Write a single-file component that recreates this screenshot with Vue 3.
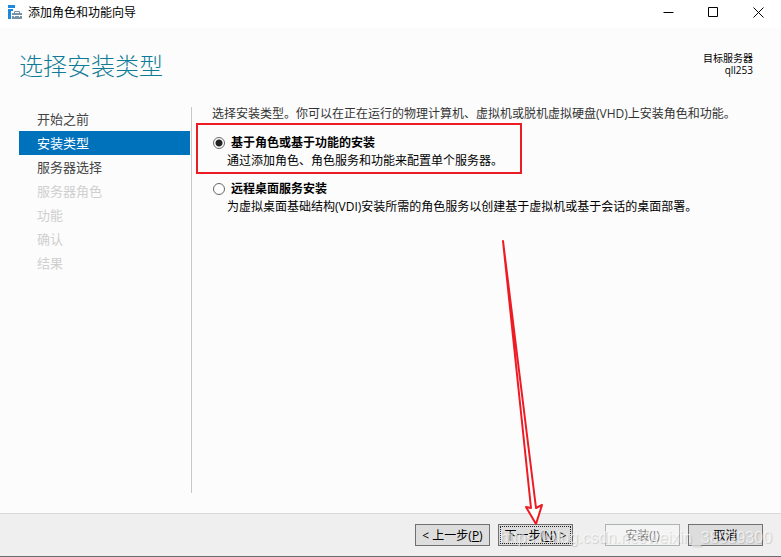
<template>
  <div class="wizard">
    <header class="titlebar">
      <svg class="app-icon" viewBox="0 0 14 14" aria-hidden="true">
        <path d="M0 0h7v3H0zM0 4h5v2H3v8H0z" fill="#1e88dc" />
        <path d="M4 8h10v2H4zM4 11h2v1h1v-1h4v1h1v-1h2v3H4z" fill="#7593a5" />
        <path d="M6.5 8V6.5h5V8" fill="none" stroke="#7593a5" />
      </svg>
      <span class="caption">添加角色和功能向导</span>
      <div class="window-buttons">
        <button type="button" aria-label="最小化">
          <svg viewBox="0 0 11 11"><path d="M0.5 5.5h10" /></svg>
        </button>
        <button type="button" aria-label="最大化">
          <svg viewBox="0 0 11 11"><path d="M0.5 0.5h9v9h-9z" /></svg>
        </button>
        <button type="button" aria-label="关闭">
          <svg viewBox="0 0 11 11"><path d="M0.5 0.5l10 10M10.5 0.5l-10 10" /></svg>
        </button>
      </div>
    </header>

    <div class="heading">
      <h1>选择安装类型</h1>
      <div class="target">
        <div>目标服务器</div>
        <div>qll253</div>
      </div>
    </div>

    <div class="body">
      <nav class="steps">
        <a
          v-for="step in steps"
          :key="step.name"
          href="#"
          :class="step.state"
          @click.prevent
        >{{ step.name }}</a>
      </nav>

      <main class="content">
        <p class="intro">
          选择安装类型。你可以在正在运行的物理计算机、虚拟机或脱机虚拟硬盘(VHD)上安装角色和功能。
        </p>
        <label
          v-for="option in options"
          :key="option.value"
          class="option"
          :class="{ marked: option.marked }"
        >
          <input v-model="selected" type="radio" name="install-type" :value="option.value" />
          <span class="option-title">{{ option.title }}</span>
          <span class="option-text">{{ option.text }}</span>
        </label>
      </main>
    </div>

    <footer class="footer">
      <button type="button">&lt; 上一步(<u>P</u>)</button>
      <button type="button" class="focused">下一步(<u>N</u>) &gt;</button>
      <button type="button" class="install" disabled>安装(<u>I</u>)</button>
      <button type="button">取消</button>
      <span class="watermark">https://blog.csdn.net/weixin_38639300</span>
    </footer>

    <svg class="arrow" viewBox="0 0 44 286" aria-hidden="true">
      <path d="M3 1L31 268L26 267L36 284L42 265L36 268Z" />
    </svg>
  </div>
</template>

<script setup>
import { ref } from 'vue'

const selected = ref('role')

const steps = [
  { name: '开始之前', state: '' },
  { name: '安装类型', state: 'active' },
  { name: '服务器选择', state: '' },
  { name: '服务器角色', state: 'disabled' },
  { name: '功能', state: 'disabled' },
  { name: '确认', state: 'disabled' },
  { name: '结果', state: 'disabled' }
]

const options = [
  {
    value: 'role',
    title: '基于角色或基于功能的安装',
    text: '通过添加角色、角色服务和功能来配置单个服务器。',
    marked: true
  },
  {
    value: 'rds',
    title: '远程桌面服务安装',
    text: '为虚拟桌面基础结构(VDI)安装所需的角色服务以创建基于虚拟机或基于会话的桌面部署。',
    marked: false
  }
]
</script>

<style>
body {
  margin: 0;
}
</style>

<style scoped>
.wizard {
  position: relative;
  display: flex;
  flex-direction: column;
  box-sizing: border-box;
  min-height: 100vh;
  border-bottom: 1px solid #6b6b6b;
  background: #fcfcfc;
  color: #000;
  font-family: "Open Sans", "Noto Sans CJK SC", sans-serif;
  font-size: 12px;
  line-height: 18px;
}

.titlebar {
  display: flex;
  align-items: center;
  height: 28px;
  padding-left: 8px;
  background: #fff;
}

.app-icon {
  width: 14px;
  height: 14px;
  margin: 0 6px 4px 0;
}

.caption {
  padding-bottom: 2px;
}

.window-buttons {
  display: flex;
  margin-left: auto;
}

.window-buttons button {
  display: flex;
  align-items: center;
  justify-content: center;
  width: 45px;
  height: 25px;
  margin-bottom: 3px;
  padding: 0;
  border: 0;
  background: none;
}

.window-buttons svg {
  width: 11px;
  height: 11px;
  overflow: visible;
  fill: none;
  stroke: #000;
}

.heading {
  display: flex;
  justify-content: space-between;
  padding: 20px 28px 0 19px;
}

h1 {
  margin: 0;
  color: #107b97;
  font-size: 24px;
  font-weight: 300;
  line-height: 36px;
}

.target {
  padding-top: 4px;
  font-size: 10px;
  line-height: 12px;
  text-align: right;
}

.body {
  display: flex;
  flex: 1;
  padding: 23px 20px 20px 19px;
}

.steps {
  display: flex;
  flex: none;
  flex-direction: column;
  width: 171px;
  padding-right: 1px;
  border-right: 1px solid #c8c8c8;
}

.steps a {
  padding-left: 18px;
  color: #444;
  font-size: 13px;
  line-height: 24px;
  text-decoration: none;
}

.steps a.active {
  background: #0072bc;
  color: #fff;
}

.steps a.disabled {
  color: #cfcfcf;
}

.content {
  flex: 1;
  padding-left: 4px;
}

.intro {
  margin: 0 0 0 16px;
  padding-bottom: 2px;
  color: #333;
  line-height: 14px;
}

.option {
  display: grid;
  grid-template-columns: 15px 1fr;
  width: fit-content;
  padding: 4px 17px 2px 15px;
  border: 2px solid transparent;
}

.option.marked {
  padding-top: 9px;
  border-color: #ed1c24;
}

.option input {
  box-sizing: border-box;
  width: 12px;
  height: 12px;
  margin: 3px 0 0;
  border: 1px solid #666;
  border-radius: 50%;
  appearance: none;
  background: #fff;
}

.option input:checked {
  background: radial-gradient(circle, #222 3px, #fff 4px);
}

.option-title {
  padding-left: 3px;
  font-weight: 700;
}

.option-text {
  grid-column: 1 / -1;
  padding-left: 14px;
}

.footer {
  position: relative;
  display: flex;
  justify-content: flex-end;
  gap: 8px;
  padding: 10px 18px;
  border-top: 1px solid #d9d9d9;
  background: #efefef;
}

.footer button {
  box-sizing: border-box;
  width: 75px;
  height: 22px;
  padding: 2px 0 0;
  border: 1px solid #707070;
  background: #ddd;
  color: #000;
  font: inherit;
  line-height: 18px;
  white-space: nowrap;
}

.footer button.focused {
  outline: 1px dotted #222;
  outline-offset: -3px;
}

.footer button.install {
  margin-left: 24px;
  border-color: #adb2b5;
  background: #f4f4f4;
  color: #838383;
}

.watermark {
  position: absolute;
  top: 15px;
  right: 9px;
  color: rgba(255, 255, 255, 0.6);
  font-family: "Liberation Sans", sans-serif;
  font-size: 16px;
  text-shadow: 1px 1px 1px rgba(0, 0, 0, 0.15);
  pointer-events: none;
}

.arrow {
  position: absolute;
  top: 240px;
  left: 500px;
  width: 44px;
  height: 286px;
  fill: #fff;
  stroke: #ed1c24;
  stroke-width: 2;
  stroke-linejoin: round;
  pointer-events: none;
}
</style>
